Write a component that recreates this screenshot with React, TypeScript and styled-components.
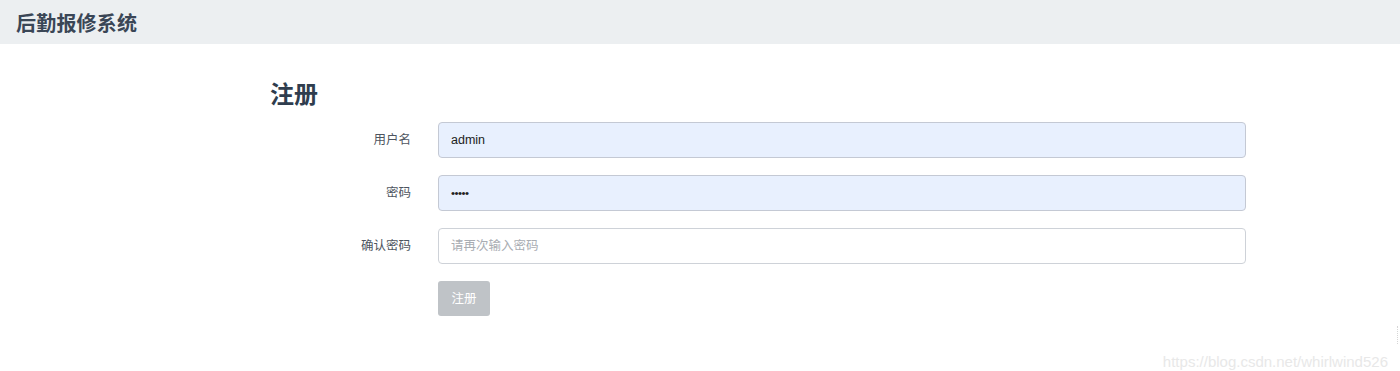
import React from "react";
import styled, { createGlobalStyle } from "styled-components";

const GlobalStyle = createGlobalStyle`
  html, body { margin: 0; padding: 0; background: #ffffff; }
  body {
    font-family: "Liberation Sans", Arial, "Noto Sans CJK SC", sans-serif;
    color: #495057;
    width: 1400px;
    height: 371px;
    overflow: hidden;
  }
  * { box-sizing: border-box; }
`;

const Page = styled.div`
  position: relative;
  width: 1400px;
  height: 371px;
  background: #ffffff;
`;

const Header = styled.header`
  height: 44px;
  background: #eceff1;
  display: flex;
  align-items: center;
  padding-left: 16px;
`;

const Brand = styled.div`
  font-family: "Noto Sans CJK SC", sans-serif;
  font-size: 20px;
  font-weight: 700;
  color: #3a4656;
  letter-spacing: 0.2px;
`;

const Main = styled.main`
  padding: 32px 0 0 270px;
`;

const Title = styled.h1`
  margin: 0 0 12px 0;
  font-family: "Noto Sans CJK SC", sans-serif;
  font-size: 24px;
  line-height: 34px;
  font-weight: 700;
  color: #2f3d4e;
`;

const Form = styled.form`
  display: grid;
  grid-template-columns: 168px 808px;
  row-gap: 17px;
  align-items: center;
`;

const Label = styled.label`
  font-family: "Noto Sans CJK SC", sans-serif;
  font-size: 12.5px;
  color: #4e5560;
  text-align: right;
  padding-right: 27px;
  padding-bottom: 4px;
`;

const Input = styled.input<{ $filled?: boolean }>`
  height: 36px;
  width: 100%;
  border: 1px solid ${(p) => (p.$filled ? "#c4c9d4" : "#ced2d8")};
  border-radius: 4px;
  background: ${(p) => (p.$filled ? "#e8f0fe" : "#ffffff")};
  padding: 0 12px;
  font-family: "Liberation Sans", Arial, "Noto Sans CJK SC", sans-serif;
  font-size: 12.5px;
  color: #222;
  outline: none;
  &::placeholder {
    color: #a9adb3;
    font-family: "Noto Sans CJK SC", sans-serif;
  }
`;

const Password = styled(Input)`
  font-size: 11.5px;
  letter-spacing: -0.5px;
`;

const Spacer = styled.div``;

const Button = styled.button`
  justify-self: start;
  width: 52px;
  height: 35px;
  border: none;
  border-radius: 3px;
  background: #bfc3c7;
  color: #ffffff;
  font-family: "Noto Sans CJK SC", sans-serif;
  font-size: 12.5px;
  padding: 0 0 2px 0;
  cursor: default;
`;

const Watermark = styled.div`
  position: absolute;
  right: 12px;
  bottom: 0px;
  font-family: "Liberation Sans", Arial, sans-serif;
  font-size: 15px;
  line-height: 18px;
  color: #e8e8e8;
`;

const EdgeMark = styled.div`
  position: absolute;
  right: 2px;
  top: 326px;
  width: 1px;
  height: 18px;
  border-left: 1px dotted #d6d6d6;
`;

export default function App() {
  return (
    <Page>
      <GlobalStyle />
      <Header>
        <Brand>后勤报修系统</Brand>
      </Header>
      <Main>
        <Title>注册</Title>
        <Form onSubmit={(e) => e.preventDefault()}>
          <Label>用户名</Label>
          <Input $filled defaultValue="admin" />
          <Label>密码</Label>
          <Password $filled type="password" defaultValue="admin" />
          <Label>确认密码</Label>
          <Input type="password" placeholder="请再次输入密码" />
          <Spacer />
          <Button type="button">注册</Button>
        </Form>
      </Main>
      <Watermark>https://blog.csdn.net/whirlwind526</Watermark>
      <EdgeMark />
    </Page>
  );
}
